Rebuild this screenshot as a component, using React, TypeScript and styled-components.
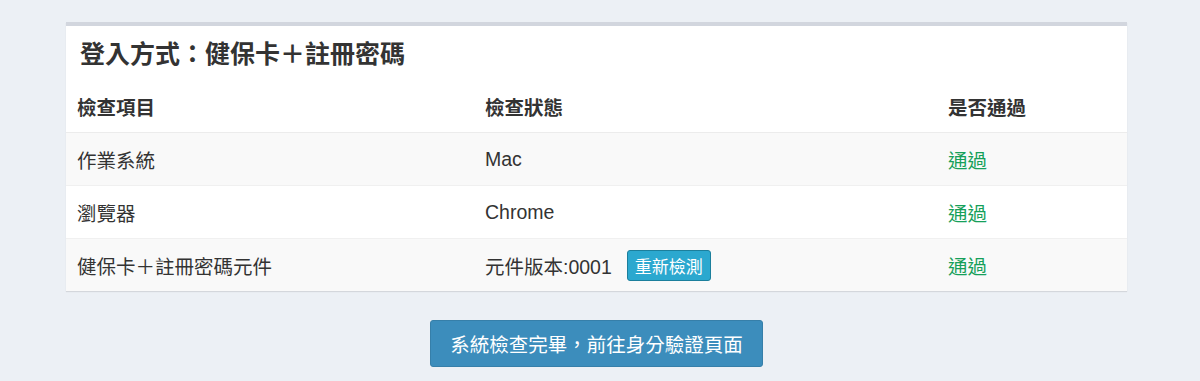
import styled, { createGlobalStyle } from 'styled-components';

const GlobalStyle = createGlobalStyle`
  body {
    margin: 0;
    background: #ecf0f5;
    font-family: "Liberation Sans", "Noto Sans CJK TC", sans-serif;
    color: #333;
  }
`;

const Page = styled.div`
  padding: 22px 73px 0 66px;
  display: flex;
  flex-direction: column;
  align-items: center;
`;

const Box = styled.section`
  width: 100%;
  background: #fff;
  border-top: 4px solid #d2d6de;
  box-shadow: 0 1px 1px rgba(0, 0, 0, 0.1);
`;

const BoxHeader = styled.h3`
  margin: 0;
  padding: 12px 14px 14px;
  font-family: "Noto Sans CJK TC", "Liberation Sans", sans-serif;
  font-size: 25px;
  line-height: 28px;
  font-weight: bold;
  color: #333;
`;

const Table = styled.table`
  width: 100%;
  table-layout: fixed;
  border-collapse: collapse;
  font-size: 19.5px;
`;

const Col = styled.col<{ $width?: number }>`
  width: ${(p) => (p.$width ? `${p.$width}px` : 'auto')};
`;

const Row = styled.tr<{ $striped?: boolean }>`
  background: ${(p) => (p.$striped ? '#f9f9f9' : '#fff')};
  border-top: 1px solid #f0f0f0;
`;

const Th = styled.th`
  height: 52px;
  padding: 0 11px;
  text-align: left;
  font-weight: bold;
  border-bottom: 1px solid #ececec;
`;

const Td = styled.td`
  height: 52px;
  padding: 0 11px;
  vertical-align: middle;
`;

const Pass = styled.span`
  color: #16a05a;
`;

const Version = styled.div`
  display: flex;
  align-items: center;
  gap: 15px;
`;

const SmallButton = styled.button`
  height: 31px;
  padding: 0 7px;
  font-family: inherit;
  font-size: 17px;
  color: #fff;
  background: #2ba8cf;
  border: 1px solid #1c7f9c;
  border-radius: 3px;
`;

const PrimaryButton = styled.button`
  margin-top: 29px;
  height: 47px;
  padding: 0 19px;
  font-family: inherit;
  font-size: 19.5px;
  color: #fff;
  background: #3c8dbc;
  border: 1px solid #367fa9;
  border-radius: 3px;
`;

const rows = [
  { item: '作業系統', status: 'Mac' },
  { item: '瀏覽器', status: 'Chrome' },
  { item: '健保卡＋註冊密碼元件', status: null },
];

export default function App() {
  return (
    <>
      <GlobalStyle />
      <Page>
        <Box>
          <BoxHeader>登入方式：健保卡＋註冊密碼</BoxHeader>
          <Table>
            <colgroup>
              <Col $width={408} />
              <Col $width={463} />
              <Col />
            </colgroup>
            <thead>
              <tr>
                <Th>檢查項目</Th>
                <Th>檢查狀態</Th>
                <Th>是否通過</Th>
              </tr>
            </thead>
            <tbody>
              {rows.map((r, i) => (
                <Row key={r.item} $striped={i % 2 === 0}>
                  <Td>{r.item}</Td>
                  <Td>
                    {r.status ?? (
                      <Version>
                        元件版本:0001
                        <SmallButton>重新檢測</SmallButton>
                      </Version>
                    )}
                  </Td>
                  <Td>
                    <Pass>通過</Pass>
                  </Td>
                </Row>
              ))}
            </tbody>
          </Table>
        </Box>
        <PrimaryButton>系統檢查完畢，前往身分驗證頁面</PrimaryButton>
      </Page>
    </>
  );
}
